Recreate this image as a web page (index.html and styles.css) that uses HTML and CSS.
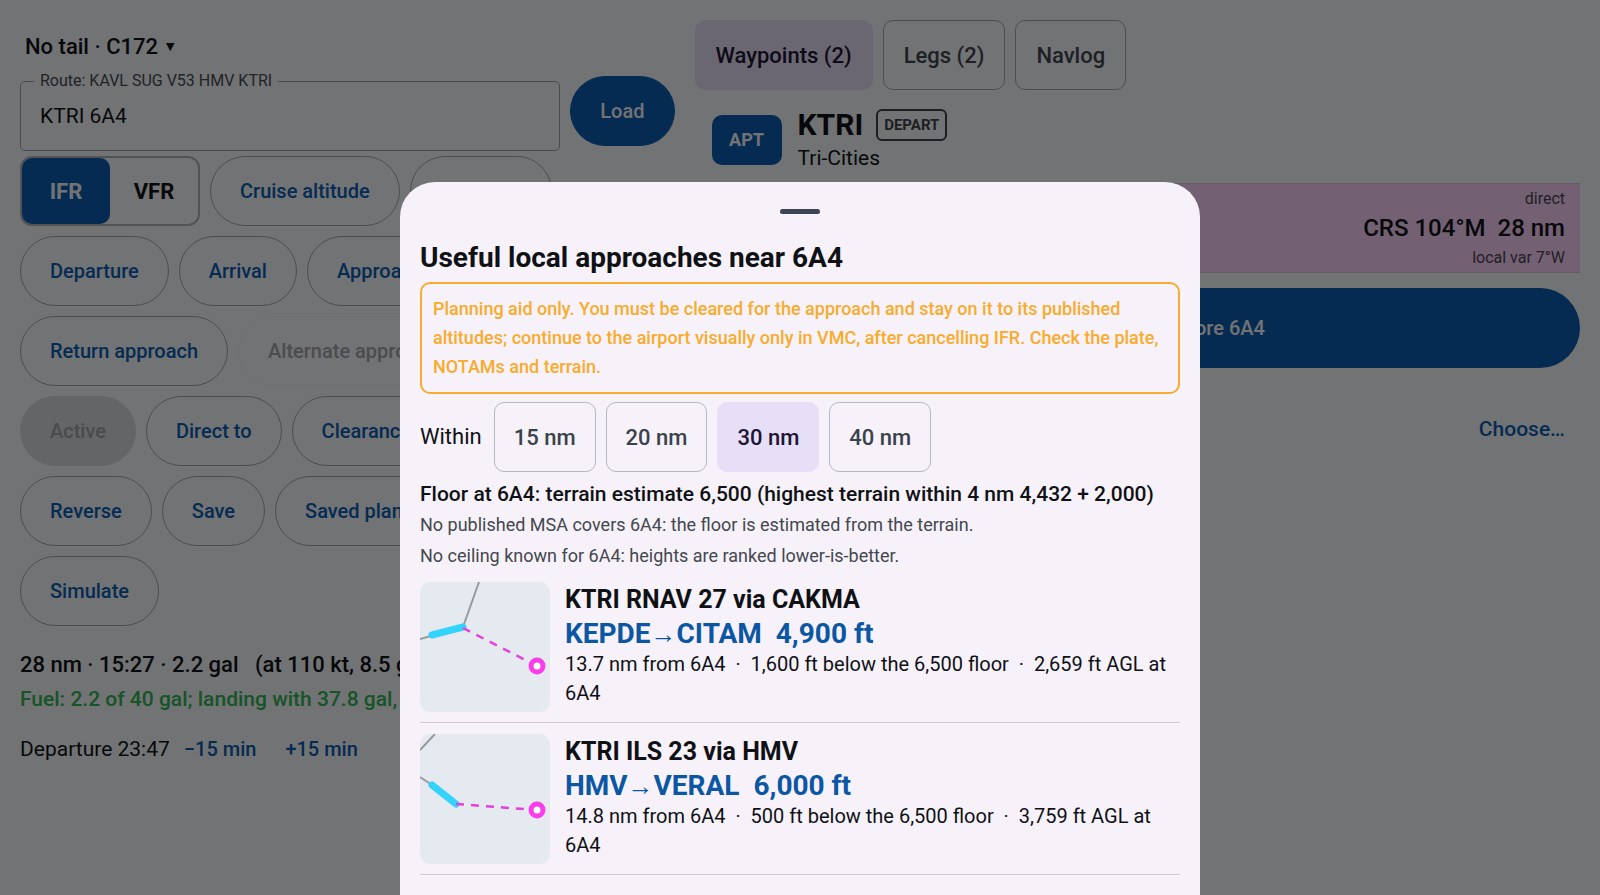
FILE: index.html
```html
<!DOCTYPE html>
<html lang="en">
<head>
<meta charset="utf-8">
<meta name="viewport" content="width=device-width, initial-scale=1">
<title>Flight plan</title>
<link rel="stylesheet" href="styles.css">
</head>
<body>
<main class="planner">
  <section class="plan">
    <button class="tail">No tail · C172 <span class="caret">▼</span></button>
    <div class="route-row">
      <div class="field">
        <label class="field-label" for="route">Route: KAVL SUG V53 HMV KTRI</label>
        <input class="field-input" id="route" type="text" value="KTRI 6A4">
      </div>
      <button class="pill pill-filled">Load</button>
    </div>
    <div class="actions">
      <div class="row">
        <div class="rules">
          <button class="rule rule-on">IFR</button>
          <button class="rule">VFR</button>
        </div>
        <button class="pill">Cruise altitude</button>
        <button class="pill">Alternate</button>
      </div>
      <div class="row">
        <button class="pill">Departure</button>
        <button class="pill">Arrival</button>
        <button class="pill">Approach</button>
      </div>
      <div class="row">
        <button class="pill">Return approach</button>
        <button class="pill pill-ghost" disabled>Alternate approach</button>
      </div>
      <div class="row">
        <button class="pill pill-off" disabled>Active</button>
        <button class="pill">Direct to</button>
        <button class="pill">Clearance</button>
      </div>
      <div class="row">
        <button class="pill">Reverse</button>
        <button class="pill">Save</button>
        <button class="pill">Saved plans</button>
      </div>
      <div class="row">
        <button class="pill">Simulate</button>
      </div>
    </div>
    <p class="totals">28 nm · 15:27 · 2.2 gal &nbsp; (at 110 kt, 8.5 gph)</p>
    <p class="fuel">Fuel: 2.2 of 40 gal; landing with 37.8 gal, 266 min</p>
    <div class="depart">
      <span class="depart-time">Departure 23:47</span>
      <button class="link-button">−15 min</button>
      <button class="link-button">+15 min</button>
    </div>
  </section>

  <section class="detail">
    <nav class="tabs">
      <button class="chip chip-on">Waypoints (2)</button>
      <button class="chip">Legs (2)</button>
      <button class="chip">Navlog</button>
    </nav>
    <div class="waypoint">
      <span class="kind">APT</span>
      <div>
        <div class="ident-row"><span class="ident">KTRI</span><span class="badge">DEPART</span></div>
        <div class="name">Tri-Cities</div>
      </div>
    </div>
    <div class="leg">
      <div class="leg-note">direct</div>
      <div class="leg-course">CRS 104°M&nbsp; 28 nm</div>
      <div class="leg-note">local var 7°W</div>
    </div>
    <button class="wide-button">Add an approach before 6A4</button>
    <div class="choose"><a class="choose-link" href="#choose">Choose…</a></div>
  </section>
</main>

<div class="scrim"></div>

<section class="sheet" role="dialog" aria-labelledby="sheet-title">
  <div class="handle"></div>
  <h1 class="sheet-title" id="sheet-title">Useful local approaches near 6A4</h1>
  <p class="warning">Planning aid only. You must be cleared for the approach and stay on it to its published altitudes; continue to the airport visually only in VMC, after cancelling IFR. Check the plate, NOTAMs and terrain.</p>
  <div class="row within">
    <span class="within-label">Within</span>
    <button class="chip">15 nm</button>
    <button class="chip">20 nm</button>
    <button class="chip chip-on">30 nm</button>
    <button class="chip">40 nm</button>
  </div>
  <p class="floor">Floor at 6A4: terrain estimate 6,500 (highest terrain within 4 nm 4,432 + 2,000)</p>
  <p class="note">No published MSA covers 6A4: the floor is estimated from the terrain.</p>
  <p class="note">No ceiling known for 6A4: heights are ranked lower-is-better.</p>
  <article class="option">
    <svg class="thumb" viewBox="0 0 130 130" aria-hidden="true">
      <path class="track" d="M59 0L43 45L0 57"/>
      <path class="segment" d="M12 53L43 45"/>
      <path class="direct" d="M43 46L117 84"/>
      <circle class="field-ring" cx="117" cy="84" r="6"/>
    </svg>
    <div class="option-text">
      <h2 class="option-title">KTRI RNAV 27 via CAKMA</h2>
      <p class="option-route">KEPDE<span class="arrow">→</span>CITAM&nbsp; 4,900 ft</p>
      <p class="option-info">13.7 nm from 6A4 &nbsp;·&nbsp; 1,600 ft below the 6,500 floor &nbsp;·&nbsp; 2,659 ft AGL at 6A4</p>
    </div>
  </article>
  <article class="option">
    <svg class="thumb" viewBox="0 0 130 130" aria-hidden="true">
      <path class="track" d="M15 0L0 16M0 43L12 51"/>
      <path class="segment" d="M12 51L36 70"/>
      <path class="direct" d="M36 70L117 76"/>
      <circle class="field-ring" cx="117" cy="76" r="6"/>
    </svg>
    <div class="option-text">
      <h2 class="option-title">KTRI ILS 23 via HMV</h2>
      <p class="option-route">HMV<span class="arrow">→</span>VERAL&nbsp; 6,000 ft</p>
      <p class="option-info">14.8 nm from 6A4 &nbsp;·&nbsp; 500 ft below the 6,500 floor &nbsp;·&nbsp; 3,759 ft AGL at 6A4</p>
    </div>
  </article>
</section>
</body>
</html>
```

FILE: styles.css
```css
* { box-sizing: border-box; }
body {
  margin: 0;
  min-height: 100vh;
  overflow: hidden;
  background: #e4e6ea;
  color: #0f1115;
  font-family: Roboto, "Liberation Sans", sans-serif;
  font-size: 22px;
}
p, h1, h2 { margin: 0; }
button { font: inherit; color: inherit; border: 0; background: none; padding: 0; white-space: nowrap; }

.planner {
  display: grid;
  grid-template-columns: minmax(0, 17fr) minmax(0, 23fr);
  gap: 20px;
  padding: 20px;
}
.row { display: flex; gap: 10px; align-items: center; }

.tail {
  display: flex;
  align-items: center;
  gap: 8px;
  height: 56px;
  padding: 0 5px 4px;
  font-weight: 500;
}
.caret { font-family: "DejaVu Sans", sans-serif; font-size: 11px; }

.route-row { display: flex; gap: 10px; align-items: flex-start; }
.field { position: relative; flex: 1; padding-top: 5px; }
.field-label {
  position: absolute;
  left: 14px;
  top: -5px;
  padding: 0 6px;
  background: #e4e6ea;
  color: #43474e;
  font-size: 16px;
  line-height: 20px;
}
.field-input {
  display: block;
  width: 100%;
  height: 70px;
  padding: 0 19px;
  border: 1px solid #94979c;
  border-radius: 5px;
  background: none;
  color: #0f1115;
  font: inherit;
  font-size: 21px;
}

.actions { display: grid; gap: 10px; margin-top: 5px; }
.pill {
  height: 70px;
  padding: 0 29px;
  border: 1px solid #989b9f;
  border-radius: 35px;
  color: #0b57a4;
  font-size: 20px;
  font-weight: 500;
}
.pill-filled { background: #0b57a4; border-color: #0b57a4; color: #e4e6ea; }
.pill-ghost { border-color: #dfe1e5; color: #96989c; }
.pill-off { background: #c9cbcf; border-color: #c9cbcf; color: #94969a; }
.rules {
  display: flex;
  height: 70px;
  border: 2px solid #a4a7ab;
  border-radius: 12px;
}
.rule { width: 88px; border-radius: 10px; font-weight: 700; }
.rule-on { background: #0b57a4; color: #e4e6ea; }

.totals { margin-top: 21px; line-height: 35px; font-weight: 500; white-space: nowrap; }
.fuel { color: #2fa84f; font-size: 21px; line-height: 35px; font-weight: 500; white-space: nowrap; }
.depart { display: flex; align-items: center; gap: 14px; height: 64px; }
.depart-time { font-size: 21px; }
.link-button { color: #0b57a4; font-size: 20px; font-weight: 500; padding-right: 15px; }

.tabs { display: flex; gap: 10px; }
.chip {
  height: 70px;
  padding: 0 19px;
  border: 1px solid #b3babf;
  border-radius: 10px;
  color: #3a424b;
  font-weight: 500;
}
.chip-on { background: #e7def8; border-color: #e7def8; color: #1d1532; }
.tabs .chip { padding: 0 20px; border-color: #989b9f; }
.tabs .chip-on { background: #d6cfe4; border-color: #d6cfe4; }

.waypoint { display: flex; align-items: center; gap: 16px; padding: 17px 17px 10px; }
.kind {
  width: 70px;
  border-radius: 10px;
  background: #0b57a4;
  color: #e4e6ea;
  font-size: 18px;
  font-weight: 700;
  line-height: 50px;
  text-align: center;
}
.ident-row { display: flex; align-items: center; gap: 13px; }
.ident { font-size: 30px; font-weight: 700; line-height: 36px; }
.badge {
  padding: 0 6px;
  border: 2px solid #3a3f47;
  border-radius: 6px;
  color: #3a3f47;
  font-size: 15px;
  font-weight: 700;
  line-height: 28px;
}
.name { font-size: 21px; line-height: 30px; }
.leg {
  padding: 0 15px;
  border: 1px solid #c4b6c8;
  border-width: 1px 0;
  background: #e7c2e6;
  text-align: right;
}
.leg-note { color: #43414f; font-size: 16px; line-height: 29px; }
.leg-course { font-size: 24px; font-weight: 500; line-height: 30px; }
.wide-button {
  width: 100%;
  height: 80px;
  margin-top: 15px;
  border-radius: 40px;
  background: #0b57a4;
  color: #e4e6ea;
  font-size: 20px;
  font-weight: 500;
}
.choose { padding: 46px 15px 0; text-align: right; line-height: 30px; }
.choose-link { color: #0b57a4; font-size: 21px; font-weight: 500; text-decoration: none; }

.scrim { position: fixed; inset: 0; background: rgba(0, 0, 0, 0.5); }

.sheet {
  position: fixed;
  top: 182px;
  bottom: 0;
  left: 50%;
  width: 50%;
  transform: translateX(-50%);
  padding: 27px 20px 0;
  border-radius: 35px 35px 0 0;
  background: #f7f2fa;
  overflow: hidden;
}
.handle { width: 40px; height: 5px; margin: 0 auto 26px; border-radius: 3px; background: #3d4654; }
.sheet-title { font-size: 28px; font-weight: 700; line-height: 36px; }
.warning {
  margin: 6px 0 8px;
  padding: 10px 11px 11px;
  border: 2px solid #f9ab2b;
  border-radius: 10px;
  color: #f9ab2b;
  font-size: 18px;
  font-weight: 500;
  line-height: 29px;
}
.within-label { padding-right: 2px; line-height: 30px; }
.floor { margin-top: 7px; font-size: 21px; font-weight: 500; line-height: 30px; white-space: nowrap; }
.note { color: #43474e; font-size: 18px; line-height: 31px; }
.option {
  display: flex;
  gap: 15px;
  padding: 11px 0 10px;
  border-bottom: 1px solid #cfc9d2;
}
.thumb { flex: none; width: 130px; height: 130px; border-radius: 10px; background: #e5eaf0; }
.track { fill: none; stroke: #979a9e; stroke-width: 2; }
.segment { stroke: #34d3fd; stroke-width: 7; stroke-linecap: round; }
.direct { stroke: #e53fdc; stroke-width: 2.5; stroke-dasharray: 8 7; }
.field-ring { fill: #ffffff; stroke: #fb3cea; stroke-width: 5; }
.option-title { font-size: 25px; font-weight: 700; line-height: 36px; }
.option-route { color: #0b57a4; font-size: 28px; font-weight: 700; line-height: 32px; }
.arrow { font-family: "Liberation Sans", sans-serif; font-size: 26px; line-height: 20px; }
.option-info { font-size: 20px; line-height: 29px; }
```
